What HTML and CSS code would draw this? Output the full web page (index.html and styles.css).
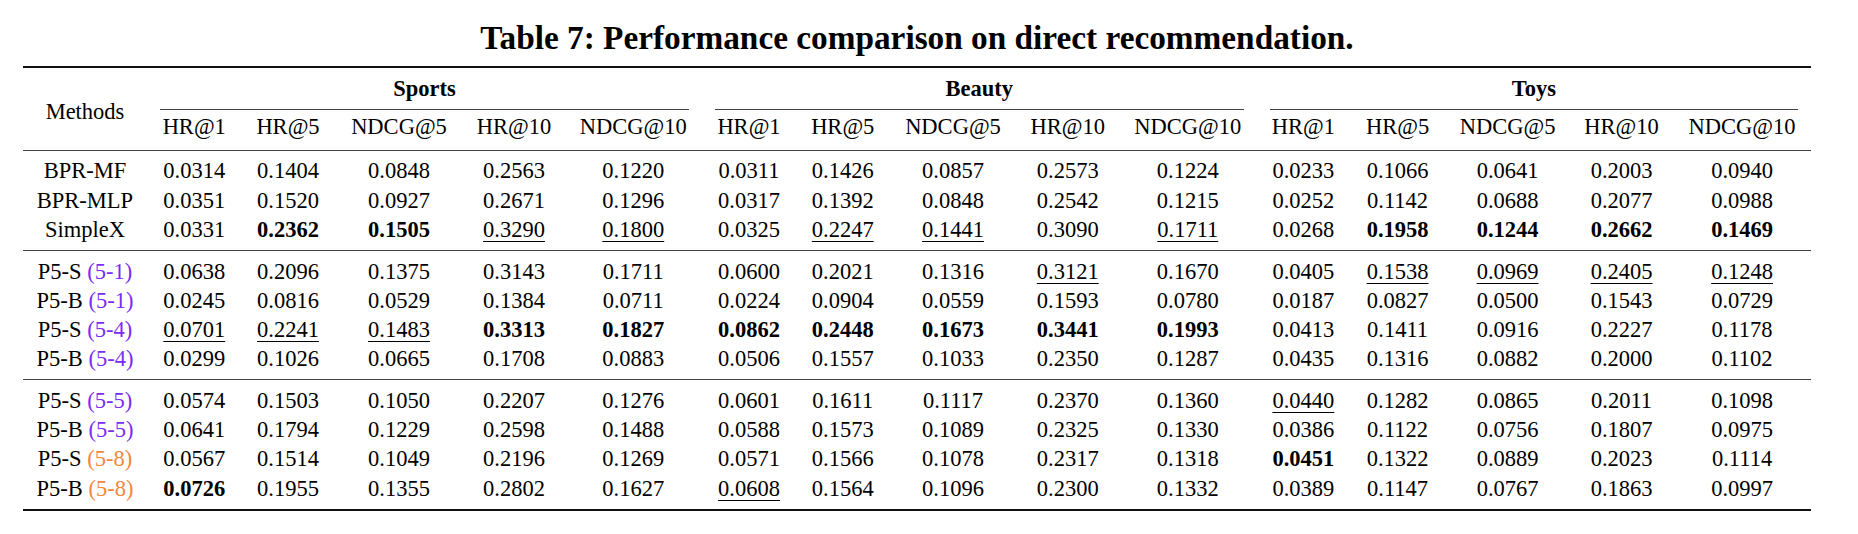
FILE: index.html
```html
<!DOCTYPE html>
<html lang="en">
<head>
<meta charset="utf-8">
<title>Table 7</title>
<link rel="stylesheet" href="styles.css">
</head>
<body>
<div class="page">
  <div class="caption">Table 7: Performance comparison on direct recommendation.</div>
  <table class="results">
    <colgroup>
      <col class="c-m">
      <col class="c-a"><col class="c-b"><col class="c-c"><col class="c-d"><col class="c-e">
      <col class="c-f"><col class="c-g"><col class="c-h"><col class="c-i"><col class="c-j">
      <col class="c-k"><col class="c-l"><col class="c-n"><col class="c-o"><col class="c-p">
    </colgroup>
    <thead>
      <tr class="head1">
        <th rowspan="2" class="methods">Methods</th>
        <th colspan="5" class="group"><div class="cmid">Sports</div></th>
        <th colspan="5" class="group"><div class="cmid">Beauty</div></th>
        <th colspan="5" class="group"><div class="cmid">Toys</div></th>
      </tr>
      <tr class="head2">
        <th>HR@1</th><th>HR@5</th><th>NDCG@5</th><th>HR@10</th><th>NDCG@10</th>
        <th>HR@1</th><th>HR@5</th><th>NDCG@5</th><th>HR@10</th><th>NDCG@10</th>
        <th>HR@1</th><th>HR@5</th><th>NDCG@5</th><th>HR@10</th><th>NDCG@10</th>
      </tr>
    </thead>
    <tbody>
      <tr>
        <td>BPR-MF</td>
        <td>0.0314</td><td>0.1404</td><td>0.0848</td><td>0.2563</td><td>0.1220</td>
        <td>0.0311</td><td>0.1426</td><td>0.0857</td><td>0.2573</td><td>0.1224</td>
        <td>0.0233</td><td>0.1066</td><td>0.0641</td><td>0.2003</td><td>0.0940</td>
      </tr>
      <tr>
        <td>BPR-MLP</td>
        <td>0.0351</td><td>0.1520</td><td>0.0927</td><td>0.2671</td><td>0.1296</td>
        <td>0.0317</td><td>0.1392</td><td>0.0848</td><td>0.2542</td><td>0.1215</td>
        <td>0.0252</td><td>0.1142</td><td>0.0688</td><td>0.2077</td><td>0.0988</td>
      </tr>
      <tr>
        <td>SimpleX</td>
        <td>0.0331</td><td><b>0.2362</b></td><td><b>0.1505</b></td><td><u>0.3290</u></td><td><u>0.1800</u></td>
        <td>0.0325</td><td><u>0.2247</u></td><td><u>0.1441</u></td><td>0.3090</td><td><u>0.1711</u></td>
        <td>0.0268</td><td><b>0.1958</b></td><td><b>0.1244</b></td><td><b>0.2662</b></td><td><b>0.1469</b></td>
      </tr>
    </tbody>
    <tbody>
      <tr>
        <td>P5-S <span class="purple">(5-1)</span></td>
        <td>0.0638</td><td>0.2096</td><td>0.1375</td><td>0.3143</td><td>0.1711</td>
        <td>0.0600</td><td>0.2021</td><td>0.1316</td><td><u>0.3121</u></td><td>0.1670</td>
        <td>0.0405</td><td><u>0.1538</u></td><td><u>0.0969</u></td><td><u>0.2405</u></td><td><u>0.1248</u></td>
      </tr>
      <tr>
        <td>P5-B <span class="purple">(5-1)</span></td>
        <td>0.0245</td><td>0.0816</td><td>0.0529</td><td>0.1384</td><td>0.0711</td>
        <td>0.0224</td><td>0.0904</td><td>0.0559</td><td>0.1593</td><td>0.0780</td>
        <td>0.0187</td><td>0.0827</td><td>0.0500</td><td>0.1543</td><td>0.0729</td>
      </tr>
      <tr>
        <td>P5-S <span class="purple">(5-4)</span></td>
        <td><u>0.0701</u></td><td><u>0.2241</u></td><td><u>0.1483</u></td><td><b>0.3313</b></td><td><b>0.1827</b></td>
        <td><b>0.0862</b></td><td><b>0.2448</b></td><td><b>0.1673</b></td><td><b>0.3441</b></td><td><b>0.1993</b></td>
        <td>0.0413</td><td>0.1411</td><td>0.0916</td><td>0.2227</td><td>0.1178</td>
      </tr>
      <tr>
        <td>P5-B <span class="purple">(5-4)</span></td>
        <td>0.0299</td><td>0.1026</td><td>0.0665</td><td>0.1708</td><td>0.0883</td>
        <td>0.0506</td><td>0.1557</td><td>0.1033</td><td>0.2350</td><td>0.1287</td>
        <td>0.0435</td><td>0.1316</td><td>0.0882</td><td>0.2000</td><td>0.1102</td>
      </tr>
    </tbody>
    <tbody class="last">
      <tr>
        <td>P5-S <span class="purple">(5-5)</span></td>
        <td>0.0574</td><td>0.1503</td><td>0.1050</td><td>0.2207</td><td>0.1276</td>
        <td>0.0601</td><td>0.1611</td><td>0.1117</td><td>0.2370</td><td>0.1360</td>
        <td><u>0.0440</u></td><td>0.1282</td><td>0.0865</td><td>0.2011</td><td>0.1098</td>
      </tr>
      <tr>
        <td>P5-B <span class="purple">(5-5)</span></td>
        <td>0.0641</td><td>0.1794</td><td>0.1229</td><td>0.2598</td><td>0.1488</td>
        <td>0.0588</td><td>0.1573</td><td>0.1089</td><td>0.2325</td><td>0.1330</td>
        <td>0.0386</td><td>0.1122</td><td>0.0756</td><td>0.1807</td><td>0.0975</td>
      </tr>
      <tr>
        <td>P5-S <span class="orange">(5-8)</span></td>
        <td>0.0567</td><td>0.1514</td><td>0.1049</td><td>0.2196</td><td>0.1269</td>
        <td>0.0571</td><td>0.1566</td><td>0.1078</td><td>0.2317</td><td>0.1318</td>
        <td><b>0.0451</b></td><td>0.1322</td><td>0.0889</td><td>0.2023</td><td>0.1114</td>
      </tr>
      <tr>
        <td>P5-B <span class="orange">(5-8)</span></td>
        <td><b>0.0726</b></td><td>0.1955</td><td>0.1355</td><td>0.2802</td><td>0.1627</td>
        <td><u>0.0608</u></td><td>0.1564</td><td>0.1096</td><td>0.2300</td><td>0.1332</td>
        <td>0.0389</td><td>0.1147</td><td>0.0767</td><td>0.1863</td><td>0.0997</td>
      </tr>
    </tbody>
  </table>
</div>
</body>
</html>
```
FILE: styles.css
```css
html, body {
  margin: 0;
  padding: 0;
  background: #ffffff;
}

body {
  font-family: "Liberation Serif", "Times New Roman", serif;
  color: #000000;
}

.page {
  padding: 18px 0 0 23px;
}

.caption {
  width: 1788px;
  text-align: center;
  font-weight: bold;
  font-size: 33.3px;
  line-height: 40px;
  margin-bottom: 8px;
}

.results {
  width: 1788px;
  table-layout: fixed;
  border-collapse: separate;
  border-spacing: 0;
  font-size: 22.5px;
}

.c-m { width: 124px; }
.c-a { width: 94.5px; }
.c-b { width: 93px; }
.c-c { width: 129px; }
.c-d { width: 101px; }
.c-e { width: 137.5px; }
.c-f { width: 94px; }
.c-g { width: 93.5px; }
.c-h { width: 127px; }
.c-i { width: 102.5px; }
.c-j { width: 137.5px; }
.c-k { width: 93.5px; }
.c-l { width: 95px; }
.c-n { width: 125px; }
.c-o { width: 103px; }
.c-p { width: 138px; }

.results th,
.results td {
  padding: 0;
  text-align: center;
  white-space: nowrap;
  font-weight: normal;
}

.head1 th {
  border-top: 2px solid #111111;
}

.methods {
  vertical-align: middle;
  line-height: 29.2px;
  padding-top: 5px !important;
  border-bottom: 1px solid #444444;
}

.group {
  vertical-align: top;
}

.cmid {
  margin: 0 13px;
  padding: 5.8px 0 6.3px;
  line-height: 29.2px;
  font-weight: bold;
  border-bottom: 1px solid #444444;
}

.head2 th {
  vertical-align: top;
  line-height: 22.5px;
  padding: 6px 0 11.2px;
  border-bottom: 1px solid #444444;
}

.results td {
  line-height: 29.2px;
}

.results tbody tr:first-child td {
  padding-top: 5.5px;
}

.results tbody tr:last-child td {
  padding-bottom: 6px;
  border-bottom: 1px solid #444444;
}

.results tbody.last tr:last-child td {
  border-bottom: 2px solid #111111;
}

.results b {
  font-weight: bold;
}

.results u {
  text-decoration: underline;
  text-decoration-thickness: 1px;
  text-underline-offset: 4px;
}

.purple {
  color: #7b2cf4;
}

.orange {
  color: #f3873a;
}
```
